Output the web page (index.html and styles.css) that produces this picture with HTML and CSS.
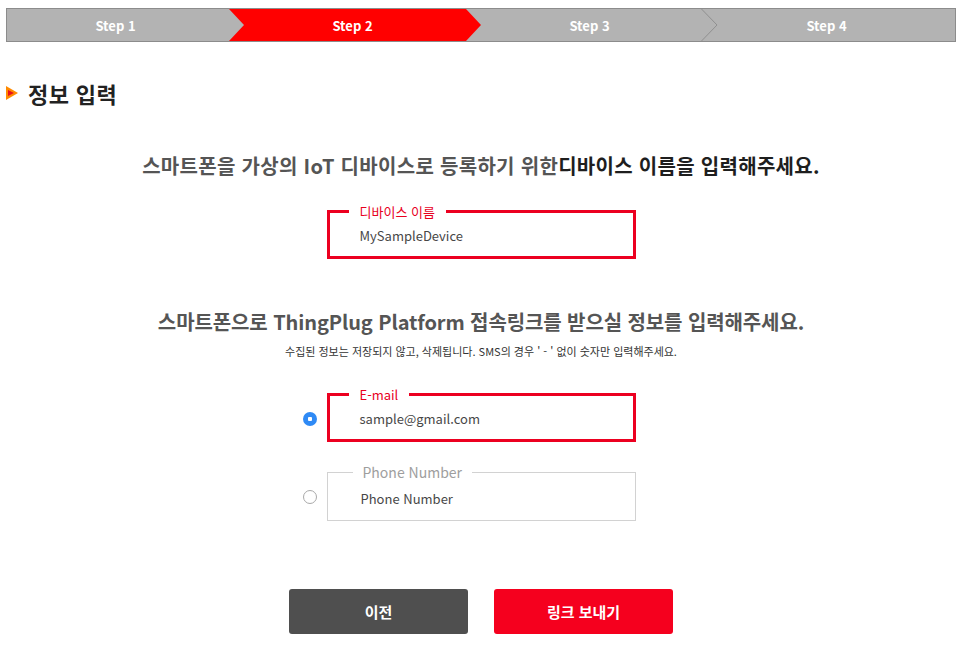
FILE: index.html
```html
<!DOCTYPE html>
<html lang="ko">
<head>
<meta charset="utf-8">
<title>정보 입력</title>
<link rel="stylesheet" href="styles.css">
</head>
<body>
<div class="page">
  <ol class="steps">
    <li class="step">Step 1</li>
    <li class="step step-active">Step 2</li>
    <li class="step">Step 3<svg class="sep" viewBox="0 0 17 34" preserveAspectRatio="none"><polyline points="0.5,0 16,17 0.5,34" fill="none" stroke="#8e8e8e" stroke-width="1"/></svg></li>
    <li class="step">Step 4</li>
  </ol>

  <h2 class="title">
    <svg class="title-icon" viewBox="0 0 12 14" width="12" height="14"><polygon points="0,0 12,7 0,14" fill="#ff8a00"/><polygon points="2,4 8,7 2,10" fill="#e8101e"/></svg>
    정보 입력
  </h2>

  <p class="lead lead-1"><span class="lead-soft">스마트폰을 가상의 IoT 디바이스로 등록하기 위한</span>디바이스 이름을 입력해주세요.</p>

  <div class="row">
    <fieldset class="field field-on">
      <legend class="field-label">디바이스 이름</legend>
      <div class="field-value">MySampleDevice</div>
    </fieldset>
  </div>

  <p class="lead lead-2">스마트폰으로 ThingPlug Platform 접속링크를 받으실 정보를 입력해주세요.</p>
  <p class="note">수집된 정보는 저장되지 않고, 삭제됩니다. SMS의 경우 ' - ' 없이 숫자만 입력해주세요.</p>

  <div class="row row-email">
    <input class="radio" type="radio" name="target" checked>
    <fieldset class="field field-on">
      <legend class="field-label">E-mail</legend>
      <div class="field-value">sample@gmail.com</div>
    </fieldset>
  </div>

  <div class="row row-phone">
    <input class="radio" type="radio" name="target">
    <fieldset class="field field-off">
      <legend class="field-label">Phone Number</legend>
      <div class="field-value">Phone Number</div>
    </fieldset>
  </div>

  <div class="actions">
    <button class="btn btn-prev" type="button">이전</button>
    <button class="btn btn-send" type="button">링크 보내기</button>
  </div>
</div>
</body>
</html>
```

FILE: styles.css
```css
* { box-sizing: border-box; }

html, body {
  margin: 0;
  padding: 0;
  background: #fff;
}

body {
  font-family: "Noto Sans CJK KR", "Noto Sans", sans-serif;
  color: #222;
}

.page {
  padding: 8px 6px 0;
}

/* stepper */
.steps {
  list-style: none;
  margin: 0;
  padding: 0;
  display: flex;
  height: 34px;
  border: 1px solid #8c8c8c;
  background: #b3b3b3;
}

.step {
  position: relative;
  flex: 0 0 237px;
  padding: 2px 20px 0 0;
  display: flex;
  align-items: center;
  justify-content: center;
  color: #fff;
  font-size: 13px;
  font-weight: 700;
  line-height: 16px;
}

.step:last-child {
  flex: 1 1 auto;
}

.step-active {
  flex: 0 0 252px;
  margin-left: -15px;
  padding-left: 15px;
  background: #ff0000;
  clip-path: polygon(0 0, calc(100% - 15px) 0, 100% 50%, calc(100% - 15px) 100%, 0 100%, 15px 50%);
}

.sep {
  position: absolute;
  right: 0;
  top: 0;
  width: 17px;
  height: 100%;
}

/* title */
.title {
  margin: 38px 0 0;
  display: flex;
  align-items: center;
  gap: 10px;
  font-size: 22px;
  line-height: 26px;
  font-weight: 700;
  color: #222;
  letter-spacing: 0.4px;
}

.title-icon {
  flex: none;
}

/* lead texts */
.lead {
  margin: 48px 0 0;
  text-align: center;
  font-size: 20px;
  line-height: 24px;
  font-weight: 700;
  color: #1e1e1e;
}

.lead-1 {
  letter-spacing: 0.3px;
}

.lead-soft {
  color: #555;
}

.lead-2 {
  margin-top: 51px;
  color: #555;
  letter-spacing: -0.1px;
}

.note {
  margin: 10px 0 0;
  text-align: center;
  font-size: 11px;
  line-height: 14px;
  color: #333;
}

/* field rows */
.row {
  display: grid;
  grid-template-columns: 1fr 309px 1fr;
  margin-top: 26px;
}

.row .field {
  grid-column: 2;
}

.row-email {
  margin-top: 29px;
}

.row-phone {
  margin-top: 23px;
}

.radio {
  grid-column: 1;
  justify-self: end;
  align-self: start;
  appearance: none;
  -webkit-appearance: none;
  width: 14px;
  height: 14px;
  margin: 25px 10px 0 0;
  border-radius: 50%;
  border: 1px solid #a9a9a9;
  background: #fff;
}

.radio:checked {
  border: none;
  background: radial-gradient(circle, #fff 0 2px, #2f8af5 2.5px);
}

.field {
  margin: 0;
  min-width: 0;
  width: 309px;
}

.field-on {
  border: 3px solid #ec0020;
  padding: 9px 0 12px 19px;
}

.field-off {
  border: 1px solid #d2d2d2;
  padding: 11px 0 13px 25px;
}

.field-label {
  padding: 0 11px;
  font-size: 13px;
  line-height: 15px;
}

.field-on .field-label {
  color: #e8001e;
}

.field-off .field-label {
  padding: 0 10px;
  color: #9e9e9e;
  font-size: 14px;
}

.field-value {
  font-size: 13px;
  line-height: 16px;
  color: #474747;
  margin-left: 11px;
}

.field-off .field-value {
  margin-left: 8px;
}

/* buttons */
.actions {
  display: flex;
  justify-content: center;
  gap: 26px;
  margin-top: 68px;
}

.btn {
  width: 179px;
  height: 45px;
  border: none;
  border-radius: 3px;
  font-family: inherit;
  font-size: 15px;
  font-weight: 700;
  color: #fff;
  cursor: pointer;
}

.btn-prev {
  background: #4f4f4f;
}

.btn-send {
  background: #f5001e;
}
```
